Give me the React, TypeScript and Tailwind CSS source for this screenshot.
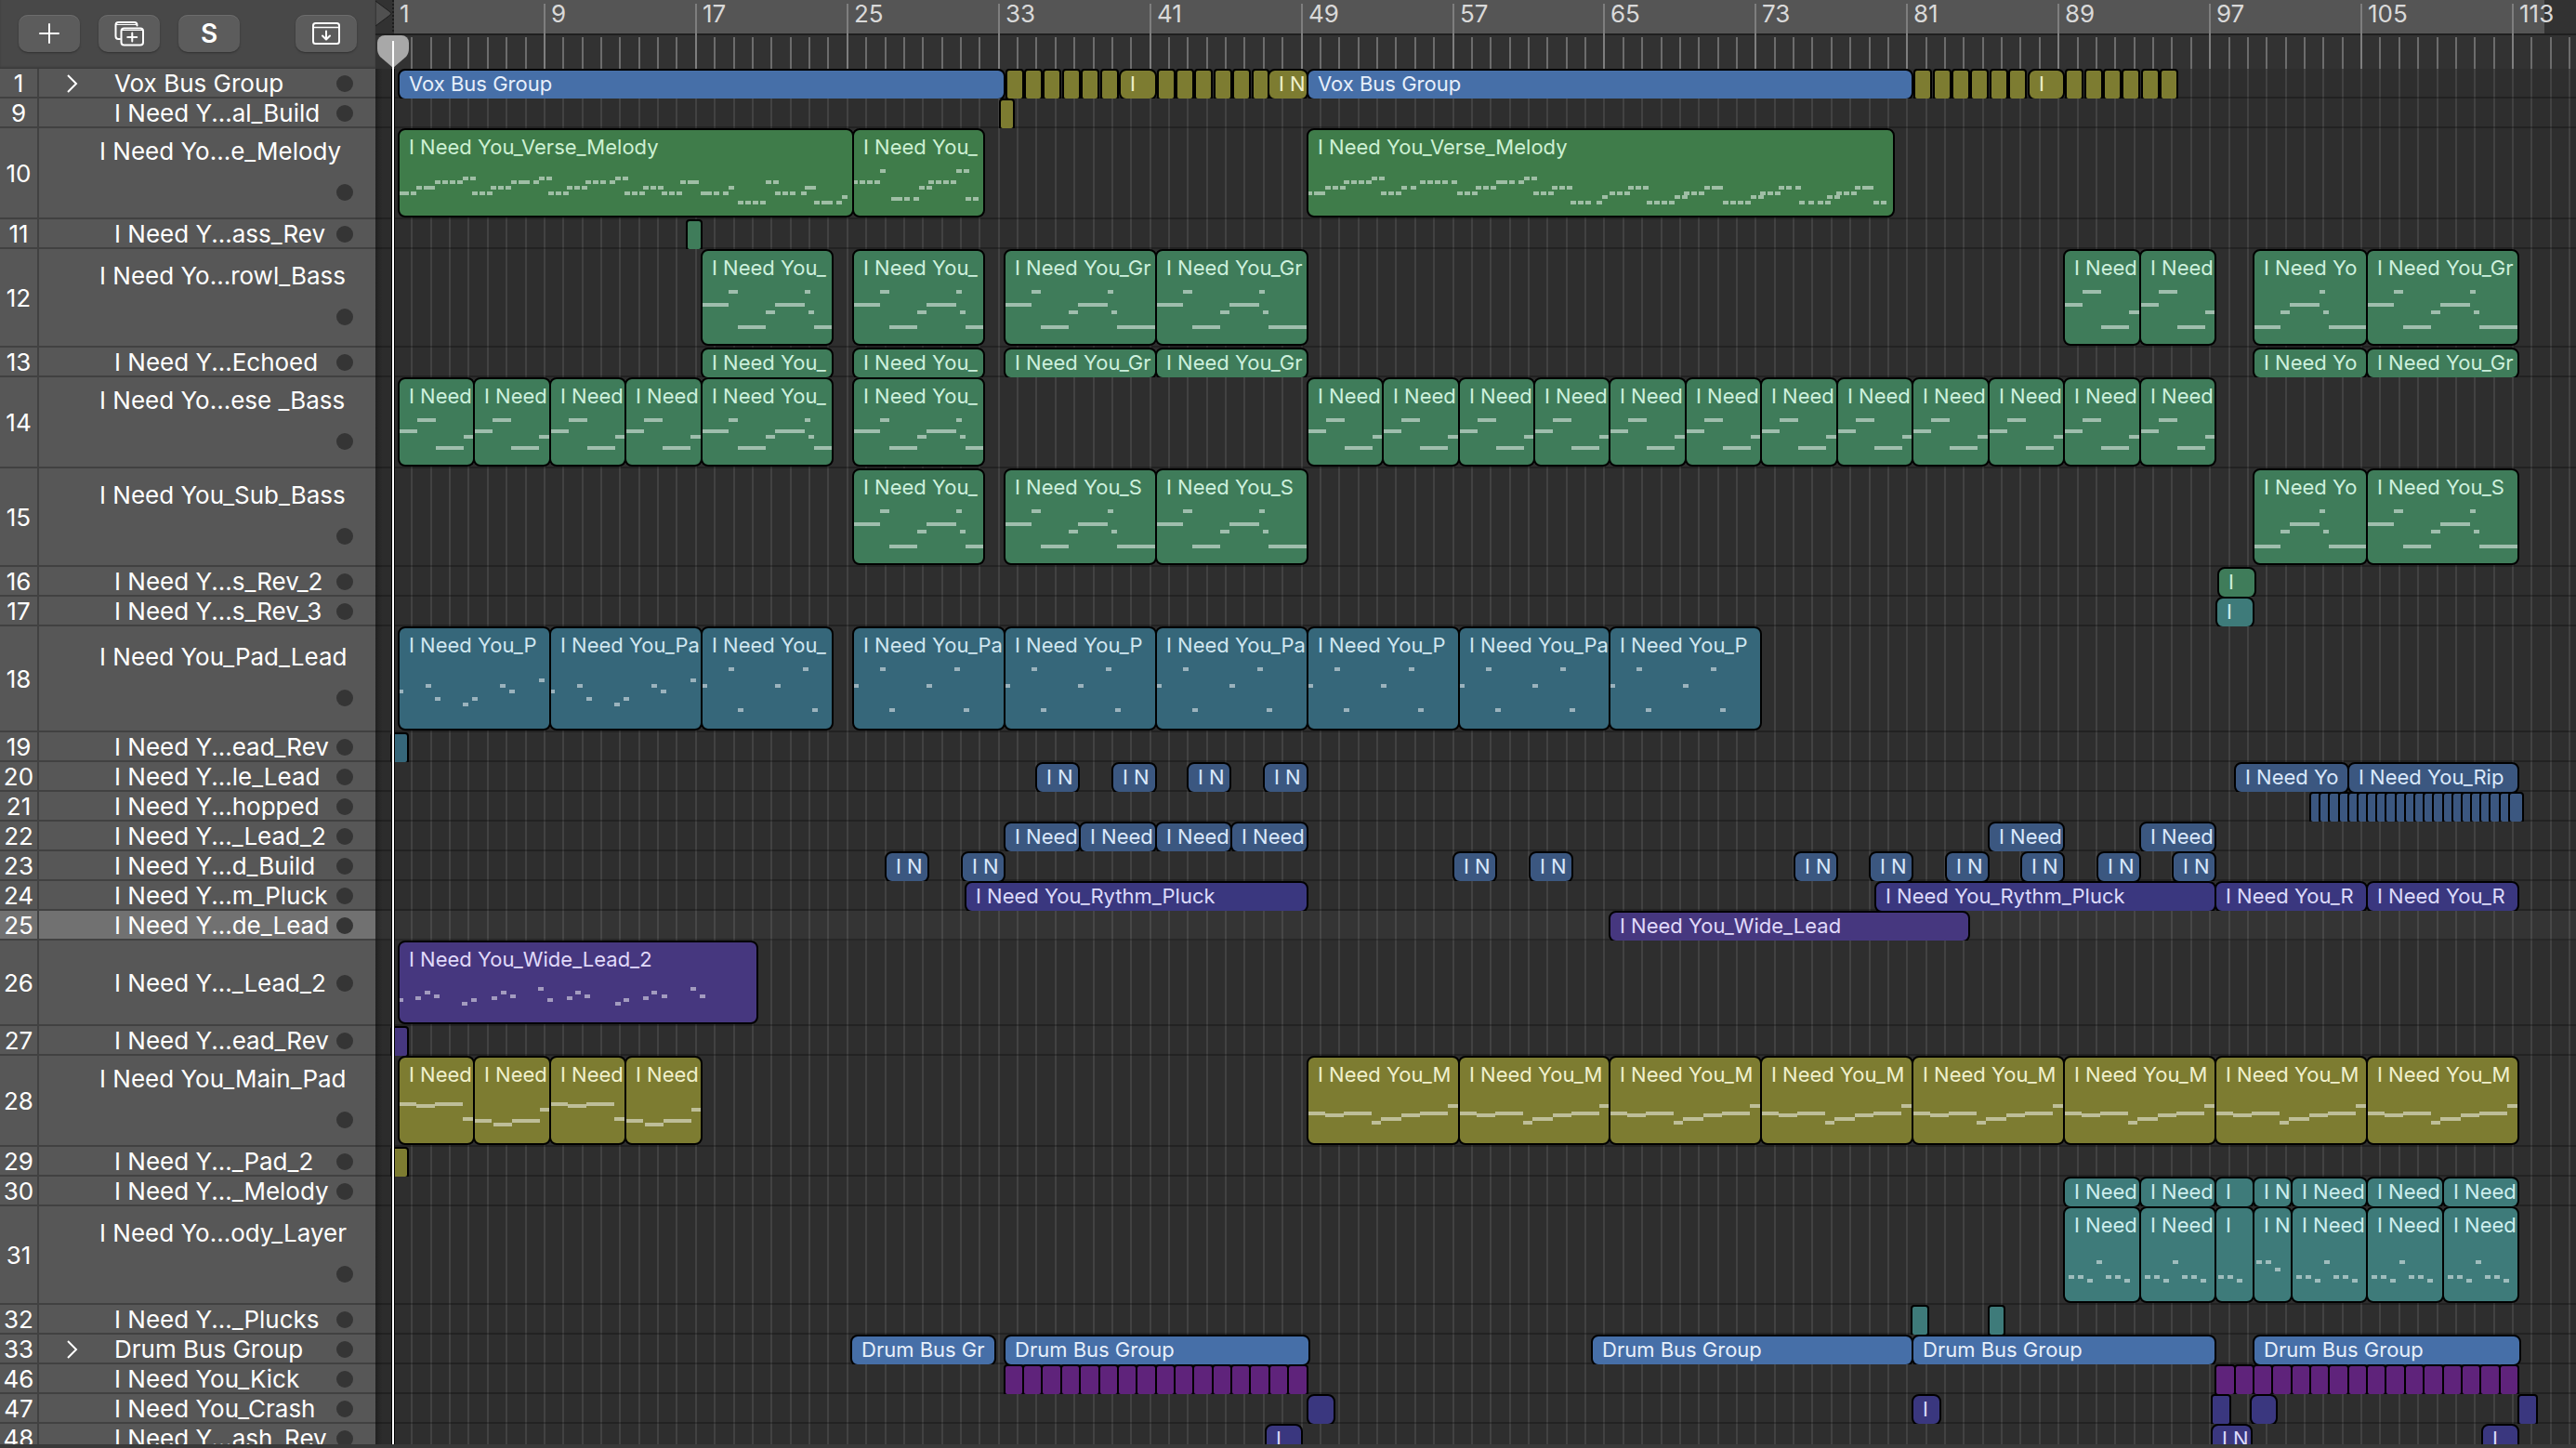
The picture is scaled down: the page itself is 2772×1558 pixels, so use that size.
import React from 'react';
import clsx from 'clsx';

type Color = 'bus' | 'olive' | 'green' | 'bass' | 'pad' | 'teal' | 'blue' | 'indigo' | 'violet' | 'purple';

// x, y, width inside the region
type Note = [number, number, number];

interface Region {
  start: number;
  end: number;
  label?: string;
  color?: Color;
  notes?: Note[];
}

interface Track {
  id: number;
  name: string;
  size: 'sm' | 'md' | 'lg' | 'xl' | 'wide';
  color: Color;
  regions: Region[];
  group?: boolean;
  selected?: boolean;
}

const COLORS: Record<Color, string> = {
  bus: 'bg-[#466fa8] text-[#e6effb]',
  olive: 'bg-[#7d7c31] text-[#f0f0cc]',
  green: 'bg-[#3f7c4a] text-[#cdf0d3]',
  bass: 'bg-[#3f7c5a] text-[#cdf0dd]',
  pad: 'bg-[#36677a] text-[#cfe6f0]',
  teal: 'bg-[#3e7b7a] text-[#cdeeee]',
  blue: 'bg-[#3b5780] text-[#d9e8fb]',
  indigo: 'bg-[#3a377f] text-[#dcdafa]',
  violet: 'bg-[#46377f] text-[#e0d9fa]',
  purple: 'bg-[#5f237b] text-[#ecd9fa]',
};

const HEIGHTS = {
  sm: 'h-8',
  wide: 'h-[92px]',
  md: 'h-[98px]',
  lg: 'h-[106px]',
  xl: 'h-[114px]',
};

// 112 bars take 2281 px
const BAR = 2281 / 112;
const barX = (bar: number) => Math.round(19 + (bar - 1) * BAR);

const repeat = (from: number, to: number, step: number, label?: string, notes?: Note[]): Region[] => {
  const out: Region[] = [];
  for (let b = from; b < to; b += step) out.push({ start: b, end: b + step, label, notes });
  return out;
};

// short one bar chops that keep a full border each
const chops = (from: number, count: number): Region[] =>
  Array.from({ length: count }, (_, i) => ({ start: from + i + 0.1, end: from + i + 0.98 }));

const dots = (y: number, ...xs: number[]): Note[] => xs.map((x) => [x, y, 6]);
const shift = (notes: Note[], by: number): Note[] => notes.map(([x, y, w]) => [x + by, y, w]);

const bassNotes = (hi: number, mid: number, lo: number, low: number): Note[] => [
  [0, mid, 28], [28, hi, 10], [38, low, 30], [68, lo, 10], [78, mid, 32], [110, hi, 6], [114, lo, 6], [120, low, 60],
];
const bassShort = (hi: number, mid: number, lo: number, low: number): Note[] => [
  [0, mid, 19], [19, hi, 20], [39, low, 30], [69, lo, 20],
];
const BASS_LG = bassNotes(42, 56, 64, 80);
const BASS_LG_SHORT = bassShort(42, 56, 64, 80);
const BASS_MD = bassNotes(42, 54, 60, 72);
const BASS_MD_SHORT = bassShort(42, 54, 60, 72);

const MELODY_1: Note[] = [
  [0, 66, 10], ...dots(66, 12), ...dots(60, 18), [26, 60, 12], ...dots(54, 38, 46, 54, 62), ...dots(50, 68, 76),
  ...dots(66, 78, 86, 94), ...dots(60, 98, 106, 114), ...dots(54, 120), [128, 54, 12], ...dots(54, 144), ...dots(50, 150, 158),
  ...dots(66, 160, 168, 176), ...dots(60, 180, 188, 196), ...dots(54, 200, 208, 216, 226), ...dots(50, 232, 240),
  ...dots(66, 242, 250, 258), ...dots(60, 262, 270, 278), ...dots(66, 282, 290, 298), ...dots(54, 302), [310, 54, 12],
  [324, 66, 12], ...dots(66, 338, 348), ...dots(60, 354), ...dots(76, 364, 372, 380, 388), ...dots(54, 394, 402),
  ...dots(66, 404, 412, 420, 432), [436, 60, 12], ...dots(76, 446), [454, 76, 12], ...dots(76, 470), ...dots(70, 476),
];
const MELODY_2: Note[] = [
  [0, 54, 4], ...dots(54, 6, 14, 22), ...dots(42, 28), [40, 72, 12], ...dots(72, 54, 64), ...dots(60, 70, 78),
  ...dots(54, 80, 88, 96, 104), ...dots(42, 110, 118), ...dots(72, 120, 128),
];
const MELODY_3: Note[] = [
  [0, 66, 4], [6, 66, 12], ...dots(60, 18, 26, 34), ...dots(54, 38, 46, 54, 62), ...dots(50, 68, 76), ...dots(66, 78, 86, 94),
  ...dots(60, 100, 110), ...dots(54, 120, 128, 136, 144, 154), ...dots(66, 160, 168, 176), ...dots(60, 180, 188, 196),
  [202, 54, 12], ...dots(54, 216, 226), ...dots(50, 232, 240), ...dots(66, 242, 250, 258), ...dots(60, 262, 270, 278),
  ...dots(76, 282, 290, 298, 310), ...dots(70, 316), ...dots(66, 324, 332, 340), ...dots(60, 344, 352, 360),
  ...dots(76, 364, 372, 380, 388), ...dots(70, 394, 402), ...dots(66, 404, 412, 420), ...dots(60, 426), [434, 60, 12],
  ...dots(76, 446, 454, 462, 470), ...dots(70, 476, 484), ...dots(66, 486, 494, 502), ...dots(60, 506, 514, 524),
  ...dots(76, 528, 538, 548, 556), ...dots(70, 558, 566), ...dots(66, 568, 576, 584), ...dots(60, 588), [596, 60, 12],
  ...dots(76, 608, 616),
];

const PAD_A: Note[] = [
  [0, 66, 4], ...dots(60, 28, 108), ...dots(74, 38, 78), ...dots(80, 68), ...dots(66, 118), ...dots(54, 150),
];
const PAD_B: Note[] = [[0, 60, 5], ...dots(42, 28, 108), ...dots(86, 38, 118), ...dots(60, 78)];

const WIDE: Note[] = [
  [0, 60, 4], ...dots(58, 17, 99, 180, 262), ...dots(52, 27, 109, 189, 271), ...dots(56, 37, 119, 199, 282, 323),
  ...dots(64, 67, 232), ...dots(60, 77, 159, 241), ...dots(48, 149, 313),
];

const MAIN_A: Note[] = [[0, 48, 18], [18, 50, 20], [38, 48, 30], [68, 64, 20]];
const MAIN_B: Note[] = [[0, 66, 18], [20, 70, 20], [40, 66, 30], [70, 54, 20]];
const MAIN_LONG: Note[] = [
  [0, 58, 18], [18, 60, 20], [38, 58, 30], [68, 68, 10], [78, 64, 22], [100, 60, 20], [120, 58, 30], [150, 50, 20],
];

const LAYER: Note[] = [...dots(72, 4, 14, 44, 54), ...dots(76, 24, 64), ...dots(56, 34)];
const LAYER_I: Note[] = [...dots(72, 2, 12), ...dots(76, 22)];
const LAYER_IN: Note[] = [...dots(56, 2, 12), ...dots(64, 22)];

const layerRegions = (notes: boolean): Region[] => [
  ...repeat(89, 97, 4, 'I Need', notes ? LAYER : undefined),
  { start: 97, end: 99, label: 'I', notes: notes ? LAYER_I : undefined },
  { start: 99, end: 101, label: 'I N', notes: notes ? LAYER_IN : undefined },
  ...repeat(101, 113, 4, 'I Need', notes ? LAYER : undefined),
];

const TRACKS: Track[] = [
  {
    id: 1, name: 'Vox Bus Group', size: 'sm', color: 'olive', group: true,
    regions: [
      { start: 1, end: 33, label: 'Vox Bus Group', color: 'bus' },
      ...chops(33, 6),
      { start: 39.1, end: 41, label: 'I' },
      ...chops(41, 6),
      { start: 46.95, end: 49, label: 'I N' },
      { start: 49, end: 81, label: 'Vox Bus Group', color: 'bus' },
      ...chops(81, 6),
      { start: 87.1, end: 89, label: 'I' },
      ...chops(89, 6),
    ],
  },
  { id: 9, name: 'I Need Y...al_Build', size: 'sm', color: 'olive', regions: [{ start: 32.75, end: 33.5 }] },
  {
    id: 10, name: 'I Need Yo...e_Melody', size: 'md', color: 'green',
    regions: [
      { start: 1, end: 25, label: 'I Need You_Verse_Melody', notes: MELODY_1 },
      { start: 25, end: 31.95, label: 'I Need You_', notes: MELODY_2 },
      { start: 49, end: 80, label: 'I Need You_Verse_Melody', notes: MELODY_3 },
    ],
  },
  { id: 11, name: 'I Need Y...ass_Rev', size: 'sm', color: 'bass', regions: [{ start: 16.2, end: 17 }] },
  {
    id: 12, name: 'I Need Yo...rowl_Bass', size: 'lg', color: 'bass',
    regions: [
      { start: 17, end: 23.95, label: 'I Need You_', notes: BASS_LG },
      { start: 25, end: 31.95, label: 'I Need You_', notes: BASS_LG },
      ...repeat(33, 49, 8, 'I Need You_Gr', BASS_LG),
      ...repeat(89, 97, 4, 'I Need', BASS_LG_SHORT),
      { start: 99, end: 105, label: 'I Need Yo', notes: shift(BASS_LG, -40) },
      { start: 105, end: 113, label: 'I Need You_Gr', notes: BASS_LG },
    ],
  },
  {
    id: 13, name: 'I Need Y...Echoed', size: 'sm', color: 'bass',
    regions: [
      { start: 17, end: 23.95, label: 'I Need You_' },
      { start: 25, end: 31.95, label: 'I Need You_' },
      ...repeat(33, 49, 8, 'I Need You_Gr'),
      { start: 99, end: 105, label: 'I Need Yo' },
      { start: 105, end: 113, label: 'I Need You_Gr' },
    ],
  },
  {
    id: 14, name: 'I Need Yo...ese _Bass', size: 'md', color: 'bass',
    regions: [
      ...repeat(1, 17, 4, 'I Need', BASS_MD_SHORT),
      { start: 17, end: 23.95, label: 'I Need You_', notes: BASS_MD },
      { start: 25, end: 31.95, label: 'I Need You_', notes: BASS_MD },
      ...repeat(49, 97, 4, 'I Need', BASS_MD_SHORT),
    ],
  },
  {
    id: 15, name: 'I Need You_Sub_Bass', size: 'lg', color: 'bass',
    regions: [
      { start: 25, end: 31.95, label: 'I Need You_', notes: BASS_LG },
      ...repeat(33, 49, 8, 'I Need You_S', BASS_LG),
      { start: 99, end: 105, label: 'I Need Yo', notes: shift(BASS_LG, -40) },
      { start: 105, end: 113, label: 'I Need You_S', notes: BASS_LG },
    ],
  },
  { id: 16, name: 'I Need Y...s_Rev_2', size: 'sm', color: 'bass', regions: [{ start: 97.15, end: 99.1, label: 'I' }] },
  { id: 17, name: 'I Need Y...s_Rev_3', size: 'sm', color: 'teal', regions: [{ start: 97.05, end: 99, label: 'I' }] },
  {
    id: 18, name: 'I Need You_Pad_Lead', size: 'xl', color: 'pad',
    regions: [
      { start: 1, end: 9, label: 'I Need You_P', notes: PAD_A },
      { start: 9, end: 17, label: 'I Need You_Pa', notes: PAD_A },
      { start: 17, end: 23.95, label: 'I Need You_', notes: PAD_B },
      { start: 25, end: 33, label: 'I Need You_Pa', notes: PAD_B },
      { start: 33, end: 41, label: 'I Need You_P', notes: PAD_B },
      { start: 41, end: 49, label: 'I Need You_Pa', notes: PAD_B },
      { start: 49, end: 57, label: 'I Need You_P', notes: PAD_B },
      { start: 57, end: 65, label: 'I Need You_Pa', notes: PAD_B },
      { start: 65, end: 73, label: 'I Need You_P', notes: PAD_B },
    ],
  },
  { id: 19, name: 'I Need Y...ead_Rev', size: 'sm', color: 'pad', regions: [{ start: 0.6, end: 1.5 }] },
  {
    id: 20, name: 'I Need Y...le_Lead', size: 'sm', color: 'blue',
    regions: [
      { start: 34.7, end: 36.95, label: 'I N' },
      { start: 38.7, end: 41, label: 'I N' },
      { start: 42.7, end: 44.95, label: 'I N' },
      { start: 46.7, end: 49, label: 'I N' },
      { start: 98, end: 104, label: 'I Need Yo' },
      { start: 104, end: 113, label: 'I Need You_Rip' },
    ],
  },
  {
    id: 21, name: 'I Need Y...hopped', size: 'sm', color: 'blue',
    regions: [...repeat(102, 112.5, 0.5), { start: 112.5, end: 113.25 }],
  },
  {
    id: 22, name: 'I Need Y..._Lead_2', size: 'sm', color: 'blue',
    regions: [...repeat(33, 49, 4, 'I Need'), ...repeat(85, 89, 4, 'I Need'), ...repeat(93, 97, 4, 'I Need')],
  },
  {
    id: 23, name: 'I Need Y...d_Build', size: 'sm', color: 'blue',
    regions: [26.75, 30.75, 56.75, 60.75, 74.75, 78.75, 82.75, 86.75, 90.75, 94.75].map((start) => ({
      start, end: start + 2.25, label: 'I N',
    })),
  },
  {
    id: 24, name: 'I Need Y...m_Pluck', size: 'sm', color: 'indigo',
    regions: [
      { start: 30.95, end: 49, label: 'I Need You_Rythm_Pluck' },
      { start: 79, end: 97, label: 'I Need You_Rythm_Pluck' },
      ...repeat(97, 113, 8, 'I Need You_R'),
    ],
  },
  {
    id: 25, name: 'I Need Y...de_Lead', size: 'sm', color: 'violet', selected: true,
    regions: [{ start: 65, end: 84, label: 'I Need You_Wide_Lead' }],
  },
  {
    id: 26, name: 'I Need Y..._Lead_2', size: 'wide', color: 'violet',
    regions: [{ start: 1, end: 19.95, label: 'I Need You_Wide_Lead_2', notes: WIDE }],
  },
  { id: 27, name: 'I Need Y...ead_Rev', size: 'sm', color: 'violet', regions: [{ start: 0.6, end: 1.5 }] },
  {
    id: 28, name: 'I Need You_Main_Pad', size: 'md', color: 'olive',
    regions: [
      ...repeat(1, 5, 4, 'I Need', MAIN_A),
      ...repeat(5, 9, 4, 'I Need', MAIN_B),
      ...repeat(9, 13, 4, 'I Need', MAIN_A),
      ...repeat(13, 17, 4, 'I Need', MAIN_B),
      ...repeat(49, 113, 8, 'I Need You_M', MAIN_LONG),
    ],
  },
  { id: 29, name: 'I Need Y..._Pad_2', size: 'sm', color: 'olive', regions: [{ start: 0.6, end: 1.5 }] },
  { id: 30, name: 'I Need Y..._Melody', size: 'sm', color: 'teal', regions: layerRegions(false) },
  { id: 31, name: 'I Need Yo...ody_Layer', size: 'lg', color: 'teal', regions: layerRegions(true) },
  {
    id: 32, name: 'I Need Y..._Plucks', size: 'sm', color: 'teal',
    regions: [{ start: 80.95, end: 81.8 }, { start: 85, end: 85.85 }],
  },
  {
    id: 33, name: 'Drum Bus Group', size: 'sm', color: 'bus', group: true,
    regions: [
      { start: 24.9, end: 32.5, label: 'Drum Bus Gr' },
      { start: 33, end: 49.1, label: 'Drum Bus Group' },
      { start: 64.05, end: 81, label: 'Drum Bus Group' },
      { start: 81, end: 97, label: 'Drum Bus Group' },
      { start: 99, end: 113.1, label: 'Drum Bus Group' },
    ],
  },
  { id: 46, name: 'I Need You_Kick', size: 'sm', color: 'purple', regions: [...repeat(33, 49, 1), ...repeat(97, 113, 1)] },
  {
    id: 47, name: 'I Need You_Crash', size: 'sm', color: 'indigo',
    regions: [
      { start: 49, end: 50.45 },
      { start: 81, end: 82.45, label: 'I' },
      { start: 96.8, end: 97.8 },
      { start: 98.85, end: 100.25 },
      { start: 113, end: 114 },
    ],
  },
  {
    id: 48, name: 'I Need Y...ash_Rev', size: 'sm', color: 'indigo',
    regions: [
      { start: 46.8, end: 48.75, label: 'I' },
      { start: 96.8, end: 98.9, label: 'I N' },
      { start: 111.1, end: 113, label: 'I' },
    ],
  },
];

const BARS = Array.from({ length: 115 }, (_, i) => i + 2);
const LABELS = Array.from({ length: 15 }, (_, i) => 1 + i * 8);

const ToolButton: React.FC<{ label: string; children: React.ReactNode; className?: string }> = ({ label, children, className }) => (
  <button
    type="button"
    aria-label={label}
    className={clsx(
      'flex h-10 w-[66px] items-center justify-center rounded-[10px] bg-[#5c5c5c] text-white shadow-[inset_0_1px_0_#6c6c6c,0_1px_2px_#303030]',
      className
    )}
  >
    {children}
  </button>
);

const Toolbar: React.FC = () => (
  <div className="flex w-[404px] shrink-0 items-start gap-5 bg-[#484848] px-5 pt-4 shadow-[inset_0_-2px_2px_#3c3c3c]">
    <ToolButton label="Add track">
      <svg width="22" height="22" viewBox="0 0 22 22" fill="none" stroke="currentColor" strokeWidth="2" strokeLinecap="round">
        <path d="M11 1v20M1 11h20" />
      </svg>
    </ToolButton>
    <ToolButton label="Duplicate track">
      <svg width="34" height="28" viewBox="0 0 34 28" fill="none" stroke="currentColor" strokeWidth="2" strokeLinecap="round">
        <path d="M7 20H5.500a3 3 0 0 1-3-3V5a3 3 0 0 1 3-3h17a3 3 0 0 1 3 3v0.500" />
        <path d="M3 4.500h22" strokeWidth="1" />
        <rect x="8.500" y="8.500" width="23.500" height="18" rx="3" />
        <path d="M9 10.500h22" strokeWidth="1" />
        <path d="M20.250 13.500v9M15.250 18h10" />
      </svg>
    </ToolButton>
    <ToolButton label="Solo">
      <span className="text-[28px] leading-8 font-semibold">S</span>
    </ToolButton>
    <ToolButton label="Track options" className="ml-auto">
      <svg width="30" height="24" viewBox="0 0 30 24" fill="none" stroke="currentColor" strokeWidth="2" strokeLinecap="round" strokeLinejoin="round">
        <rect x="1" y="1" width="28" height="22" rx="2.500" />
        <path d="M1 5.500h28" strokeWidth="1.600" />
        <path d="M15 9.500v8.500M11 14.500l4 4 4-4" />
      </svg>
    </ToolButton>
  </div>
);

const Ruler: React.FC = () => (
  <div className="relative flex-1 overflow-hidden bg-[#323232]">
    {/* cycle strip */}
    <div className="mr-[34px] ml-5 h-9 bg-[#555555]" />
    <div className="h-0.5 bg-[#1f1f1f]" />
    {BARS.map((bar) => (
      <div
        key={bar}
        className={clsx('absolute bottom-0 w-0.5', bar % 8 === 1 ? 'top-1 bg-[#7e7e7e]' : 'top-10 bg-[#6c6c6c]')}
        style={{ left: barX(bar) - 1 }}
      />
    ))}
    {LABELS.map((bar) => (
      <span key={bar} className="absolute top-0 pl-[7px] text-[26px] leading-[30px] text-[#d9d9d9]" style={{ left: barX(bar) }}>
        {bar}
      </span>
    ))}
    <svg className="absolute top-0 left-0" width="18" height="30" viewBox="0 0 18 30">
      <path d="M0 1L16 13a2 2 0 0 1 0 3L0 28z" fill="#505050" stroke="#1f1f1f" />
    </svg>
  </div>
);

const TrackHeader: React.FC<{ track: Track }> = ({ track }) => {
  const single = track.size === 'sm' || track.size === 'wide';
  return (
    <li
      className={clsx(
        'flex shrink-0 text-[26px] text-white shadow-[inset_0_-2px_0_#414141]',
        HEIGHTS[track.size],
        track.selected ? 'bg-[#717171]' : 'bg-[#575757]'
      )}
    >
      <span className="flex w-[42px] items-center justify-center border-r-2 border-[#414141] leading-[30px]">{track.id}</span>
      {single ? (
        <div className="relative flex flex-1 items-center pr-6 pl-[81px]">
          {track.group && (
            <button type="button" aria-label={`Expand ${track.name}`} className="absolute left-7">
              <svg width="14" height="20" viewBox="0 0 14 20" fill="none" stroke="currentColor" strokeWidth="2">
                <path d="M3 1l9 9-9 9" />
              </svg>
            </button>
          )}
          <span className="flex-1 leading-[30px] whitespace-nowrap">{track.name}</span>
          <span className="size-[18px] rounded-full bg-[#353535]" />
        </div>
      ) : (
        <div className="flex flex-1 flex-col justify-center gap-5 pr-6 pb-2.5 pl-[65px]">
          <span className="leading-[30px] whitespace-nowrap">{track.name}</span>
          <span className="size-[18px] self-end rounded-full bg-[#353535]" />
        </div>
      )}
    </li>
  );
};

const RegionBlock: React.FC<{ region: Region; track: Track }> = ({ region, track }) => {
  // neighbouring regions share one 2px border
  const left = barX(region.start) + 5;
  const width = barX(region.end) + 7 - left;
  const small = track.size === 'sm';
  return (
    <div
      className={clsx(
        'absolute top-0 overflow-hidden border-2 border-black pl-2.5 text-[22px] leading-6 whitespace-nowrap',
        COLORS[region.color ?? track.color],
        small ? '-bottom-0.5 pt-0.5' : 'bottom-0.5 pt-1.5',
        width < 25 ? 'rounded-[4px]' : 'rounded-[8px]'
      )}
      style={{ left, width }}
    >
      {region.label}
      {region.notes && (
        <svg className="absolute inset-0 h-full w-full" fill="#ffffff" fillOpacity="0.5">
          {region.notes.map(([x, y, w], i) => (
            <rect key={i} x={x} y={y} width={w} height="4" />
          ))}
        </svg>
      )}
    </div>
  );
};

const Playhead: React.FC = () => (
  <div className="pointer-events-none absolute top-0 bottom-1 left-[406px] flex w-[34px] flex-col items-center">
    <div className="h-[38px] border-l-2 border-dotted border-[#1c1c1c]" />
    <svg width="34" height="36" viewBox="0 0 34 36" className="shrink-0">
      <path d="M8 0h18a8 8 0 0 1 8 8v6c0 4-1 6-3 9L17 35 3 23C1 20 0 18 0 14V8a8 8 0 0 1 8-8z" fill="#a8a8a8" />
      <path d="M17 6v30" stroke="#ffffff" strokeWidth="2" />
    </svg>
    <div className="w-1 flex-1 border-x border-black bg-white" />
  </div>
);

const App: React.FC = () => {
  return (
    <main className="relative flex h-screen flex-col overflow-hidden bg-[#393939] font-['Inter',sans-serif]">
      <div className="flex h-[74px] shrink-0">
        <Toolbar />
        <Ruler />
      </div>

      <div className="flex min-h-0 flex-1 overflow-hidden">
        <ul className="flex w-[404px] shrink-0 flex-col">
          {TRACKS.map((track) => (
            <TrackHeader key={track.id} track={track} />
          ))}
        </ul>

        <div className="relative flex-1 overflow-hidden bg-[#2e2e2e]">
          {BARS.map((bar) => (
            <div key={bar} className="absolute inset-y-0 w-0.5 bg-[#424242]" style={{ left: barX(bar) - 1 }} />
          ))}
          <div className="absolute inset-y-0 left-0 w-[18px] bg-linear-to-r from-[#202020] to-[#2c2c2c] to-40%" />
          {TRACKS.map((track) => (
            <div
              key={track.id}
              className={clsx(
                'relative overflow-hidden shadow-[inset_0_-2px_0_rgba(0,0,0,0.25)]',
                HEIGHTS[track.size],
                track.selected && 'bg-white/3'
              )}
            >
              {track.regions.map((region) => (
                <RegionBlock key={region.start} region={region} track={track} />
              ))}
            </div>
          ))}
        </div>
      </div>

      <div className="h-1 shrink-0" />
      <Playhead />
    </main>
  );
};

export default App;
